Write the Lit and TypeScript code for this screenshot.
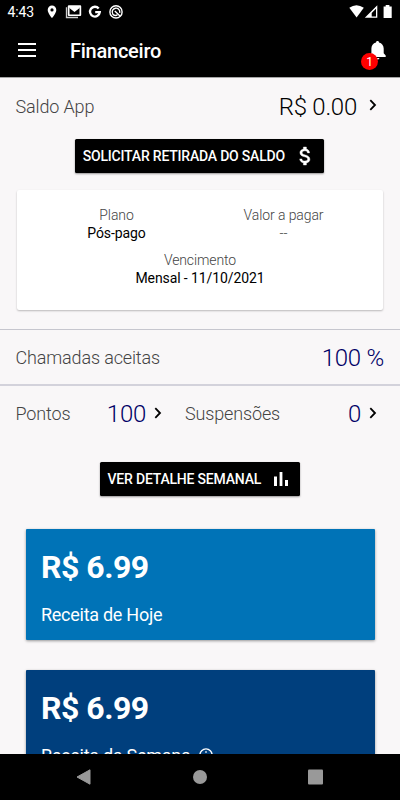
import { LitElement, html, css, svg } from "lit";
import { customElement, property } from "lit/decorators.js";

const chevron = html`<svg class="chev" width="8" height="12" viewBox="0 0 8 12">
  <path d="M1.3 1.2 6 6 1.3 10.8" fill="none" stroke="#000" stroke-width="1.8" />
</svg>`;

@customElement("status-bar")
class StatusBar extends LitElement {
  static styles = css`
    :host {
      display: flex;
      align-items: center;
      height: 24px;
      box-sizing: border-box;
      padding: 0 7px 0 7.5px;
      color: #fff;
      flex: none;
    }
    .time {
      font-size: 14px;
      letter-spacing: -0.1px;
      width: 38.5px;
      line-height: 24px;
    }
    svg {
      display: block;
    }
    .left {
      display: flex;
      align-items: center;
      gap: 5px;
      flex: 1;
    }
    .right {
      display: flex;
      align-items: center;
    }
  `;
  render() {
    return html`
      <div class="time">4:43</div>
      <div class="left">
        <svg width="12" height="16" viewBox="0 0 12 16">
          <path fill="#fff" fill-rule="evenodd" d="M6 1.6a4.3 4.3 0 0 0-4.3 4.3C1.7 9.1 6 14 6 14s4.3-4.9 4.3-8.1A4.3 4.3 0 0 0 6 1.6zM6 4.3a1.6 1.6 0 1 1 0 3.2 1.6 1.6 0 0 1 0-3.2z" />
        </svg>
        <svg width="20" height="16" viewBox="0 0 20 16">
          <path d="M3.5 3.3v10.2h11.5" fill="none" stroke="#ccc" stroke-width="1.3" />
          <path fill="#fff" fill-rule="evenodd" d="M5.8 1.3h11.4q1 0 1 1v8.8q0 1-1 1H5.8q-1 0-1-1V2.3q0-1 1-1zM6.5 2.9v7.7h10V2.9l-5 4.2z" />
          <path d="M6.5 3.2 11.5 7.1l5-3.9" fill="none" stroke="#fff" stroke-width="1.5" />
        </svg>
        <svg width="15" height="16" viewBox="0 0 15 16">
          <path d="M10.7 4.5A4.9 4.9 0 1 0 11.8 8.2H7.2" fill="none" stroke="#fff" stroke-width="2.3" />
        </svg>
        <svg width="18" height="16" viewBox="0 0 18 16">
          <circle cx="8" cy="7.9" r="6.1" fill="none" stroke="#fff" stroke-width="1.4" />
          <path d="M4.9 10.2A3.8 3.8 0 1 1 11.7 8.8M6.8 7l5.2 4.9M4.7 10.2q2.4 2.2 4.7.7" fill="none" stroke="#fff" stroke-width="1.4" />
        </svg>
      </div>
      <div class="right">
        <svg width="44" height="16" viewBox="0 0 44 16">
          <path fill="#fff" d="M.3 3.7Q7.5-1.3 14.8 3.7L7.6 13.6z" />
          <path fill="#fff" fill-rule="evenodd" d="M28.3 1.3v12.5H15.8zM27 4.7l-4.3 4.3v3.6H27z" />
          <path fill="#fff" d="M34.6 2.4h2.1V1h3.7v1.4h2.3v11.5h-8.1z" />
        </svg>
      </div>
    `;
  }
}

@customElement("tool-bar")
class ToolBar extends LitElement {
  static styles = css`
    :host {
      display: flex;
      align-items: center;
      height: 53px;
      box-sizing: border-box;
      padding: 0 14.5px 0 18px;
      color: #fff;
      flex: none;
    }
    svg {
      display: block;
    }
    .menu {
      margin-top: -1px;
    }
    h1 {
      margin: 1px 0 0 34px;
      font-size: 20px;
      letter-spacing: -0.25px;
      font-weight: 500;
      line-height: 24px;
      flex: 1;
    }
    .bell {
      position: relative;
      width: 18px;
      height: 20px;
      margin-top: -1px;
    }
    .badge {
      position: absolute;
      left: -6.5px;
      top: 13px;
      width: 17px;
      height: 17px;
      border-radius: 50%;
      background: #f00;
      font-size: 12px;
      line-height: 18px;
      text-align: center;
    }
  `;
  render() {
    return html`
      <svg class="menu" width="18" height="16" viewBox="0 0 18 16">
        <path fill="#fff" d="M0 1h18v2H0zM0 7h18v2H0zM0 13h18v2H0z" />
      </svg>
      <h1>Financeiro</h1>
      <div class="bell">
        <svg width="18" height="20" viewBox="0 0 18 20">
          <path fill="#fff" d="M9.5 1c1 0 1.500.7 1.500 1.600 2.900.7 4.700 3 4.700 6v4.700l2 2.200v1.500H1.400v-1.500l2-2.200V8.600c0-3 1.700-5.300 4.600-6C8 1.700 8.500 1 9.500 1zM7.500 18h4q-.3 1.600-2 1.600t-2-1.600z" />
        </svg>
        <span class="badge">1</span>
      </div>
    `;
  }
}

@customElement("action-button")
class ActionButton extends LitElement {
  @property() label = "";
  @property() icon = "";
  static styles = css`
    :host {
      display: flex;
      align-items: center;
      justify-content: space-between;
      box-sizing: border-box;
      height: 34.5px;
      padding: 0 7.5px;
      background: #000;
      color: #fff;
      border-radius: 1.5px;
      box-shadow: 0 1px 2px rgba(0, 0, 0, 0.4);
      font-size: 14px;
      letter-spacing: -0.2px;
      font-weight: 500;
      white-space: nowrap;
    }
    span {
      padding-top: 1px;
    }
    svg {
      display: block;
    }
  `;
  render() {
    const shape =
      this.icon === "money"
        ? svg`<path fill="#fff" stroke="#fff" stroke-width=".4" d="M12.2 10.9c-2.3-.6-3-1.2-3-2.2 0-1.1 1-1.9 2.7-1.9 1.8 0 2.5.9 2.5 2.1h2.2c-.1-1.7-1.1-3.3-3.2-3.8V3h-3v2.1c-1.9.4-3.5 1.7-3.5 3.6 0 2.3 1.9 3.5 4.7 4.1 2.5.6 3 1.5 3 2.4 0 .7-.5 1.8-2.7 1.8-2.1 0-2.9-.9-3-2.1H6.7c.1 2.2 1.8 3.5 3.7 3.9V21h3v-2.1c2-.4 3.5-1.5 3.5-3.6 0-2.8-2.4-3.8-4.7-4.4z" />`
        : svg`<path fill="#fff" d="M5 9.5h3V19H5zM10.6 5h2.8v14h-2.8zM16 13h3v6h-3z" />`;
    return html`<span>${this.label}</span>
      <svg width="24" height="24" viewBox="0 0 24 24">${shape}</svg>`;
  }
}

@customElement("revenue-card")
class RevenueCard extends LitElement {
  @property() amount = "";
  @property() label = "";
  @property({ type: Boolean }) info = false;
  static styles = css`
    :host {
      display: block;
      box-sizing: border-box;
      height: 111px;
      padding: 18px 15px 0 15.5px;
      color: #fff;
      border-radius: 1px;
      box-shadow: 0 1px 3px rgba(0, 0, 0, 0.4);
    }
    .amount {
      font-size: 32px;
      letter-spacing: -0.5px;
      font-weight: 700;
      line-height: 40px;
    }
    .label {
      display: flex;
      align-items: center;
      gap: 9px;
      margin-top: 16px;
      font-size: 18px;
      letter-spacing: -0.27px;
      line-height: 24px;
    }
    svg {
      margin-top: -2px;
    }
  `;
  render() {
    return html`
      <div class="amount">${this.amount}</div>
      <div class="label">
        <span>${this.label}</span>
        ${this.info
          ? html`<svg width="14" height="14" viewBox="0 0 14 14">
              <circle cx="7" cy="7" r="6.1" fill="none" stroke="#fff" stroke-width="1.4" />
              <path d="M7 3.2v1.5M7 6v4.5" stroke="#fff" stroke-width="1.5" />
            </svg>`
          : ""}
      </div>
    `;
  }
}

@customElement("app-root")
class AppRoot extends LitElement {
  static styles = css`
    :host {
      display: flex;
      flex-direction: column;
      height: 800px;
      overflow: hidden;
      background: #000;
      font-family: Roboto, "Liberation Sans", sans-serif;
    }
    main {
      flex: 1;
      min-height: 0;
      overflow: hidden;
      display: flex;
      flex-direction: column;
      background: #f9f7f8;
      border-top: 1px solid #a5a5a5;
      box-sizing: border-box;
    }
    .row {
      display: flex;
      align-items: center;
      height: 55px;
      padding: 0 16px 0 15.5px;
      flex: none;
    }
    .balance {
      height: 56px;
    }
    .name,
    .value {
      padding-top: 1px;
    }
    .accepted .name,
    .accepted .value {
      padding-top: 2px;
    }
    .name {
      font-size: 18px;
      letter-spacing: -0.15px;
      font-weight: 300;
      color: #444;
    }
    .value {
      margin-left: auto;
      font-size: 24px;
      letter-spacing: -0.25px;
      font-weight: 300;
      color: #000066;
    }
    .value.black {
      color: #000;
    }
    .chev {
      display: block;
      margin: 0 7px 2px 12px;
    }
    .half {
      display: flex;
      align-items: center;
    }
    .points {
      width: 169.5px;
    }
    .points .chev {
      margin-right: 23px;
    }
    .susp {
      flex: 1;
    }
    .half .chev {
      margin-left: 8px;
      margin-bottom: 1px;
    }
    .plan {
      margin: 17px 17.5px 18.5px 17px;
      height: 120px;
      box-sizing: border-box;
      padding: 16px 15.5px 0 16px;
      display: grid;
      grid-template-columns: 1fr 1fr;
      align-content: start;
      row-gap: 8.5px;
      background: #fff;
      border-radius: 2px;
      box-shadow: 0 1px 2px rgba(0, 0, 0, 0.25);
      text-align: center;
      font-size: 14px;
      letter-spacing: -0.1px;
      line-height: 18.2px;
      flex: none;
    }
    .wide {
      grid-column: span 2;
    }
    .plan .cap {
      color: #444;
      font-weight: 300;
    }
    .plan .val {
      color: #000;
    }
    .withdraw {
      width: 249px;
      align-self: center;
      margin-top: 4.5px;
      margin-right: 0.5px;
      flex: none;
    }
    .accepted {
      border-top: 1px solid #c6c6ce;
      border-bottom: 2px solid #d3d2db;
      height: 54px;
    }
    .weekly {
      width: 200px;
      align-self: center;
      margin-top: 21px;
      flex: none;
    }
    revenue-card {
      margin: 32.5px 25.5px 0 25.5px;
      flex: none;
    }
    .today {
      background: #0073b7;
    }
    .week {
      background: #003f7d;
      margin-top: 30.5px;
    }
    nav {
      height: 46px;
      flex: none;
      display: flex;
      align-items: center;
      justify-content: center;
      box-sizing: border-box;
      padding-bottom: 1px;
    }
  `;
  render() {
    return html`
      <status-bar></status-bar>
      <tool-bar></tool-bar>
      <main>
        <div class="row balance">
          <span class="name">Saldo App</span>
          <span class="value black">R$ 0.00</span>
          ${chevron}
        </div>
        <action-button class="withdraw" label="SOLICITAR RETIRADA DO SALDO" icon="money"></action-button>
        <section class="plan">
          <div>
            <div class="cap">Plano</div>
            <div class="val">Pós-pago</div>
          </div>
          <div>
            <div class="cap">Valor a pagar</div>
            <div class="cap">--</div>
          </div>
          <div class="wide">
            <div class="cap">Vencimento</div>
            <div class="val">Mensal - 11/10/2021</div>
          </div>
        </section>
        <div class="row accepted">
          <span class="name">Chamadas aceitas</span>
          <span class="value">100 %</span>
        </div>
        <div class="row">
          <div class="half points">
            <span class="name">Pontos</span>
            <span class="value">100</span>
            ${chevron}
          </div>
          <div class="half susp">
            <span class="name">Suspensões</span>
            <span class="value">0</span>
            ${chevron}
          </div>
        </div>
        <action-button class="weekly" label="VER DETALHE SEMANAL" icon="bars"></action-button>
        <revenue-card class="today" amount="R$ 6.99" label="Receita de Hoje"></revenue-card>
        <revenue-card class="week" amount="R$ 6.99" label="Receita da Semana" info></revenue-card>
      </main>
      <nav>
        <svg width="400" height="40" viewBox="0 0 400 40">
          <path fill="#999" stroke="#999" stroke-linejoin="round" d="M77 20 90 12.8v14.4z" />
          <circle cx="200" cy="20" r="7" fill="#999" />
          <rect x="308" y="12.6" width="15" height="15" rx="1" fill="#999" />
        </svg>
      </nav>
    `;
  }
}
